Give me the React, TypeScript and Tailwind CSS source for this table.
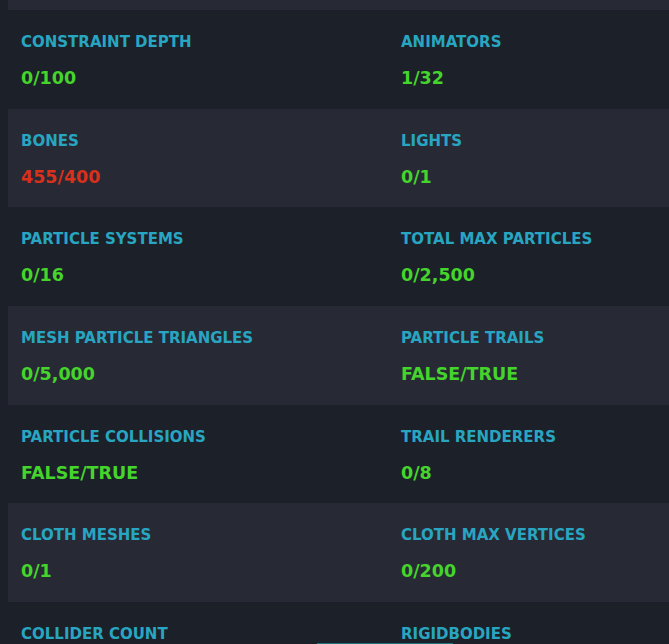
const ROWS: { label: string; value: string; over?: boolean }[][] = [
  [
    { label: 'Constraint Depth', value: '0/100' },
    { label: 'Animators', value: '1/32' },
  ],
  [
    { label: 'Bones', value: '455/400', over: true },
    { label: 'Lights', value: '0/1' },
  ],
  [
    { label: 'Particle Systems', value: '0/16' },
    { label: 'Total Max Particles', value: '0/2,500' },
  ],
  [
    { label: 'Mesh Particle Triangles', value: '0/5,000' },
    { label: 'Particle Trails', value: 'False/True' },
  ],
  [
    { label: 'Particle Collisions', value: 'False/True' },
    { label: 'Trail Renderers', value: '0/8' },
  ],
  [
    { label: 'Cloth Meshes', value: '0/1' },
    { label: 'Cloth Max Vertices', value: '0/200' },
  ],
  [
    { label: 'Collider Count', value: '0/8' },
    { label: 'Rigidbodies', value: '0/8' },
  ],
];

function Stat({ label, value, over }: { label: string; value: string; over?: boolean }) {
  return (
    <div className="flex flex-col gap-[14px]">
      <span className="text-[15px] leading-[20px] font-bold uppercase text-[#28a6c1]">{label}</span>
      <span
        className={`text-[17.5px] leading-[24px] font-bold uppercase ${over ? 'text-[#d9301c]' : 'text-[#45d42b]'}`}
      >
        {value}
      </span>
    </div>
  );
}

export default function App() {
  return (
    <div
      className="relative w-[669px] h-[644px] overflow-hidden bg-[#1c2029]"
      style={{ fontFamily: '"DejaVu Sans", Verdana, sans-serif' }}
    >
      {/* tail of the previous row */}
      <div className="ml-[8px] h-[10px] bg-[#272a35]" />

      {ROWS.map((row, i) => (
        <div
          key={i}
          className={`ml-[8px] h-[98.67px] pt-[22px] pl-[13px] grid grid-cols-[380px_1fr] ${
            i % 2 === 1 ? 'bg-[#272a35]' : 'bg-[#1c2029]'
          }`}
        >
          {row.map(s => (
            <Stat key={s.label} {...s} />
          ))}
        </div>
      ))}

      {/* scroll indicator */}
      <div className="absolute bottom-0 left-[317px] w-[136px] h-px bg-[#1d7178]" />
    </div>
  );
}
